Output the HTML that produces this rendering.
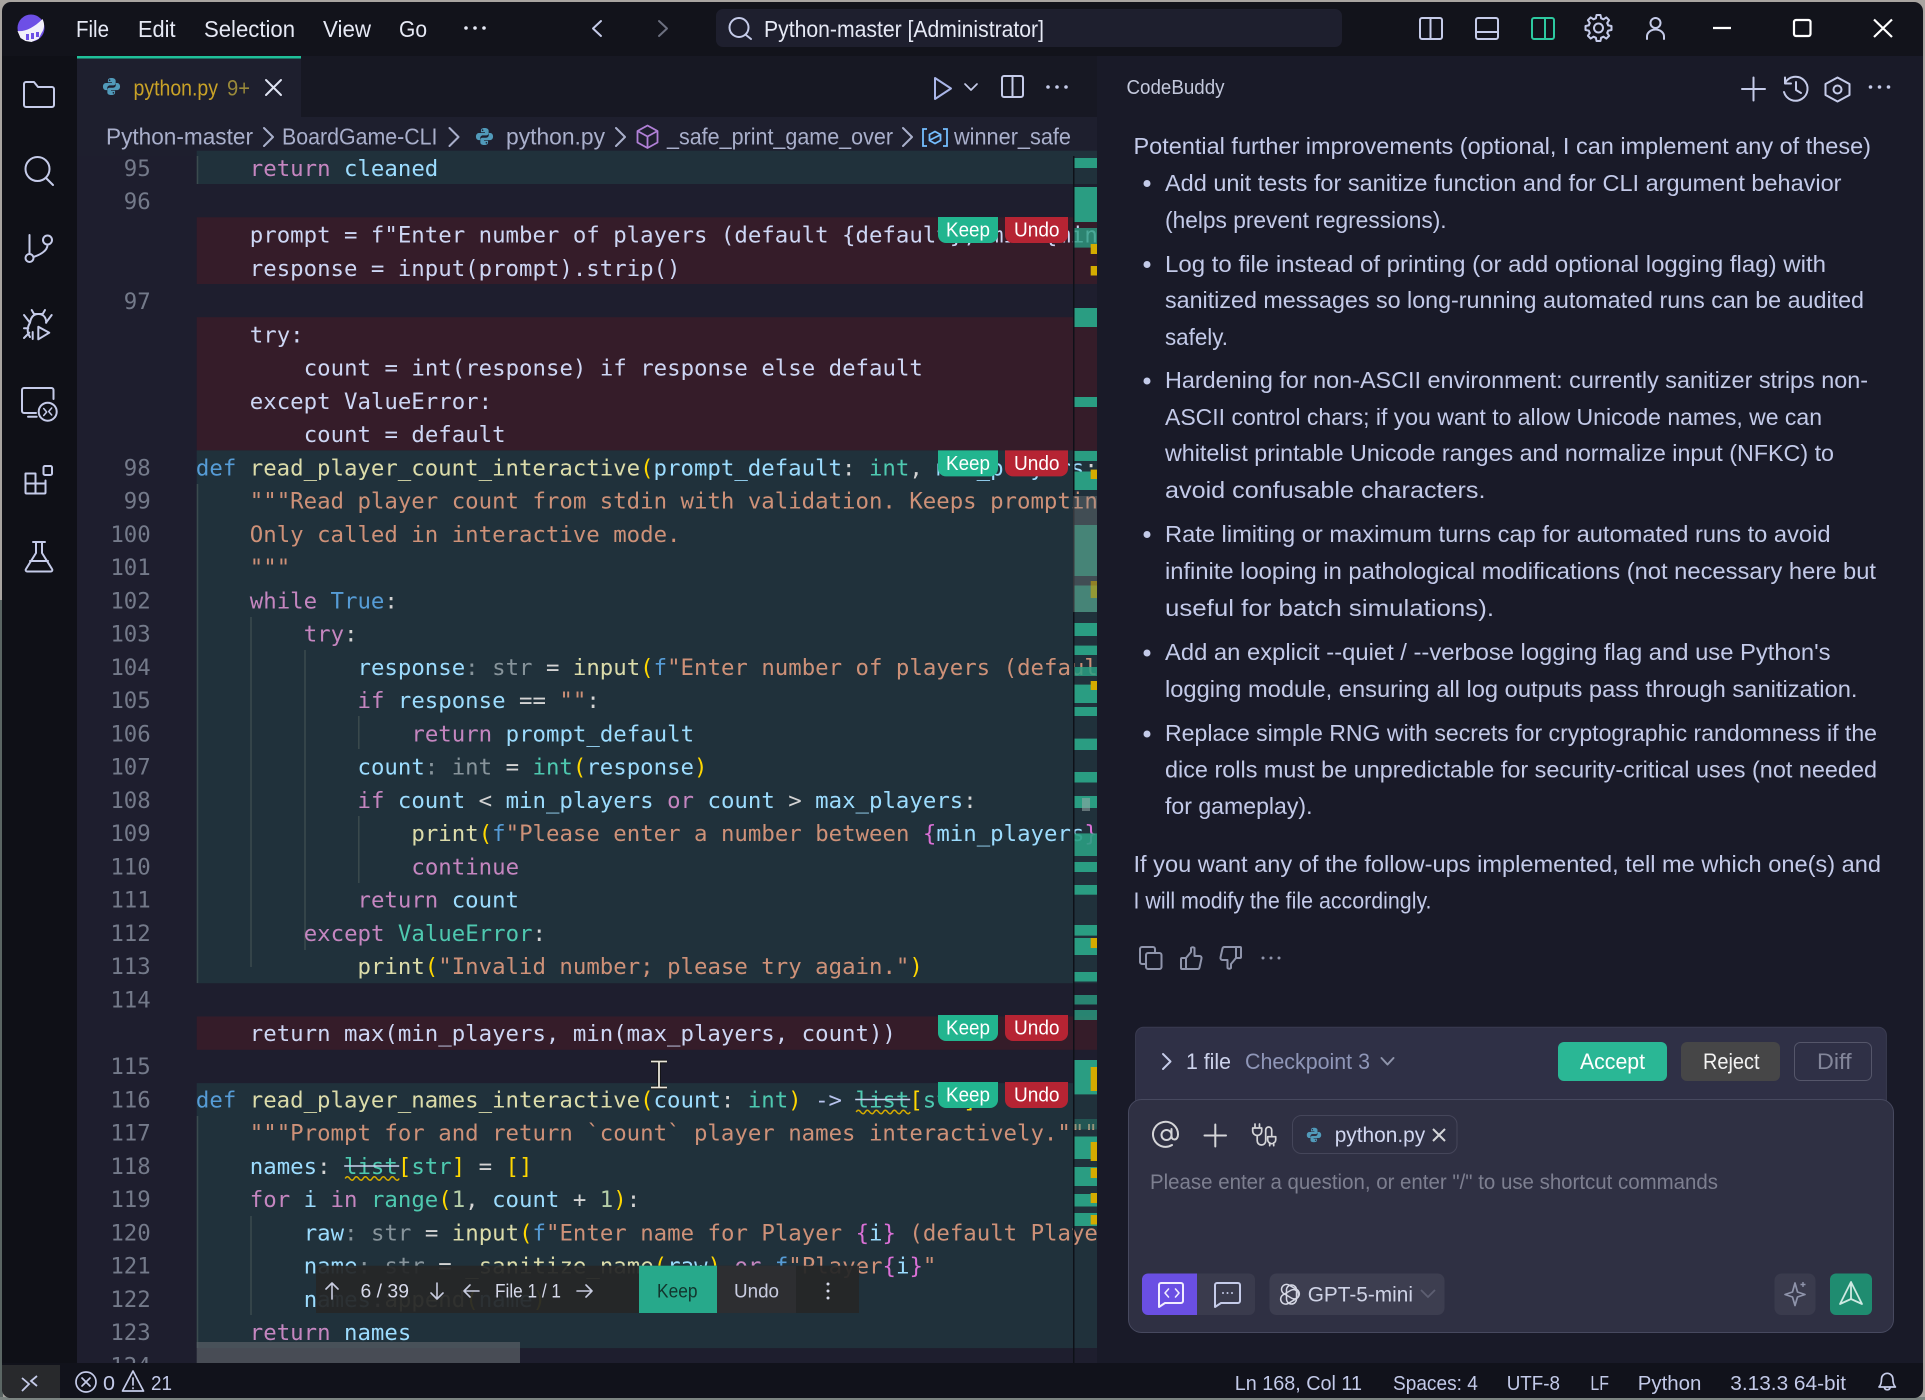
<!DOCTYPE html>
<html lang="en"><head><meta charset="utf-8"><title>Python-master [Administrator]</title>
<style>
html,body{margin:0;padding:0;background:#8d8a86;width:1925px;height:1400px;overflow:hidden}
svg{display:block;position:absolute;left:0;top:0}
text{font-family:"Liberation Sans",sans-serif;white-space:pre}
.u{fill:#e6e9f5;font-size:23px}
.c{fill:#c3cae9;font-size:23px}
.st{fill:#c3cae9;font-size:20.500px}
.code text,.ln{font-family:"DejaVu Sans Mono",monospace;font-size:22.37px}
.code text{fill:#cdd6f4}
.ln{fill:#747a8a;text-anchor:end}
.k{fill:#c586c0}.v{fill:#9cdcfe}.f{fill:#dcdcaa}.s{fill:#ce9178}.t{fill:#4ec9b0}.b{fill:#569cd6}.n{fill:#b5cea8}.o{fill:#d4d4d4}.y{fill:#ffd700}.p{fill:#da70d6}.l{fill:#179fff}.g{fill:#87949b}.a{fill:#b8c4ee}
.ic{fill:none;stroke:#c5cbe9;stroke-width:2;stroke-linecap:round;stroke-linejoin:round}
.ig{fill:none;stroke:#8f94ab;stroke-width:2;stroke-linecap:round;stroke-linejoin:round}
.ov{fill:#2a9d82}.yw{fill:#d4ab00}
</style></head><body>
<svg width="1925" height="1400" viewBox="0 0 1925 1400" xmlns="http://www.w3.org/2000/svg">
<defs>
<clipPath id="ed"><rect x="77" y="156" width="1020" height="1207"/></clipPath>
<clipPath id="win"><rect x="2" y="2" width="1921" height="1396" rx="9"/></clipPath>
<symbol id="py" viewBox="0 0 16 16"><path fill="#519aba" d="M8 .8C5.6.8 5 1.8 5 2.9v1.5h3.4V5H3.2C1.9 5 .8 6.2.8 8s1 3 2.3 3h1.3V9.3c0-1.3 1-2.3 2.3-2.3h3c1.100 0 1.800-.8 1.800-1.800V2.900C11.300 1.700 10.300.8 8 .8zM6.400 2a.7.7 0 1 1 0 1.400.7.7 0 0 1 0-1.400z"/><path fill="#519aba" d="M8 15.200c2.400 0 3-1 3-2.100v-1.500H7.600V11h5.200c1.300 0 2.400-1.200 2.400-3s-1-3-2.300-3h-1.300v1.700c0 1.300-1 2.300-2.300 2.300h-3c-1.100 0-1.800.8-1.800 1.800v2.300c0 1.200 1 2.100 3.300 2.100zm1.600-1.200a.7.7 0 1 1 0-1.400.7.7 0 0 1 0 1.400z"/></symbol>
<g id="tooth"><path d="M-3.830-9.240L-2.600-9.650L-2-13H2L2.600-9.650L3.830-9.240"/></g>
<g id="ku">
<path fill="#22b58f" d="M938 0h60v18a8 8 0 0 1-8 8h-44a8 8 0 0 1-8-8z"/>
<text x="946" y="19.500" fill="#fff" font-size="20" textLength="44" lengthAdjust="spacingAndGlyphs">Keep</text>
<path fill="#b62433" d="M1005 0h63v18a8 8 0 0 1-8 8h-47a8 8 0 0 1-8-8z"/>
<text x="1014" y="19.500" fill="#fff" font-size="20" textLength="45.500" lengthAdjust="spacingAndGlyphs">Undo</text>
</g>
</defs>

<rect width="1925" height="1400" fill="#a9a5a1"/>
<rect x="0" y="600" width="3" height="800" fill="#5b6664"/>
<rect x="0" y="1397" width="1925" height="3" fill="#7d8582"/>
<g clip-path="url(#win)">
<!-- panels -->
<rect x="0" y="0" width="1925" height="56" fill="#12131b"/>
<rect x="0" y="56" width="77" height="1310" fill="#0f1017"/>
<rect x="77" y="56" width="1020" height="61" fill="#171823"/>
<rect x="77" y="58" width="224" height="59" fill="#1e1f2e"/>
<rect x="77" y="56" width="224" height="2.500" fill="#1fc19a"/>
<rect x="77" y="117" width="1020" height="39" fill="#1e1f2e"/>
<rect x="77" y="156" width="1020" height="1207" fill="#1e1e2e"/>
<rect x="1097" y="56" width="828" height="1307" fill="#191a28"/>
<rect x="0" y="1363" width="1925" height="37" fill="#11121b"/>

<!-- title bar -->
<circle cx="31" cy="28" r="13.500" fill="#6d4fe6"/>
<path fill="#f2f0fb" d="M17.500 31c7 1 16-3 25-12 2.500 5 2 10-1 14l-3 6-7 3-6-1-5-3z"/>
<path fill="#6d4fe6" d="M26 34h3v6h-3zM31 33h3v6h-3zM36 32h3v5h-3z"/>
<text class="u" x="76" y="37" textLength="33" lengthAdjust="spacingAndGlyphs">File</text>
<text class="u" x="138" y="37" textLength="37.500" lengthAdjust="spacingAndGlyphs">Edit</text>
<text class="u" x="204" y="37" textLength="91" lengthAdjust="spacingAndGlyphs">Selection</text>
<text class="u" x="323" y="37" textLength="48" lengthAdjust="spacingAndGlyphs">View</text>
<text class="u" x="399" y="37" textLength="28" lengthAdjust="spacingAndGlyphs">Go</text>
<g fill="#e6e9f5"><circle cx="466" cy="28" r="1.800"/><circle cx="475" cy="28" r="1.800"/><circle cx="484" cy="28" r="1.800"/></g>
<path class="ic" stroke="#dfe3f2" d="M601 21l-8 7.500 8 7.500"/>
<path class="ig" style="stroke:#6c7080" d="M659 21l8 7.500-8 7.500"/>
<rect x="716" y="9" width="626" height="38" rx="7" fill="#1e1f2e"/>
<circle class="ic" cx="739" cy="27.500" r="9.500"/><path class="ic" d="M746 35l5 4"/>
<text class="u" x="764" y="37" textLength="280" lengthAdjust="spacingAndGlyphs">Python-master [Administrator]</text>
<g class="ic">
<rect x="1420" y="18" width="22" height="21" rx="2"/><path d="M1430.500 18v21"/>
<rect x="1476" y="18" width="22" height="21" rx="2"/><path d="M1476 32h22"/>
<rect x="1532" y="18" width="22" height="21" rx="2" style="stroke:#2dc9a0"/><path d="M1545 18v21" style="stroke:#2dc9a0"/>
<circle cx="1598.500" cy="28" r="4.500"/>
<g transform="translate(1598.500 28)"><use href="#tooth"/><use href="#tooth" transform="rotate(45)"/><use href="#tooth" transform="rotate(90)"/><use href="#tooth" transform="rotate(135)"/><use href="#tooth" transform="rotate(180)"/><use href="#tooth" transform="rotate(225)"/><use href="#tooth" transform="rotate(270)"/><use href="#tooth" transform="rotate(315)"/></g>
<circle cx="1655.500" cy="23" r="5"/><path d="M1647 39v-2.500a8.500 7 0 0 1 17 0v2.500"/>
</g>
<g fill="none" stroke="#fff" stroke-width="2.200">
<path d="M1713 28h18"/><rect x="1794" y="20" width="16.500" height="16" rx="2"/><path d="M1874 19.500l18 17.500M1892 19.500l-18 17.500"/>
</g>

<!-- activity bar -->
<g class="ic">
<path d="M26 82h8l4 5h14a2 2 0 0 1 2 2v16a2 2 0 0 1-2 2H26a2 2 0 0 1-2-2V84a2 2 0 0 1 2-2z"/>
<circle cx="37.500" cy="169" r="12"/><path d="M46 178l7 7"/>
<circle cx="29.500" cy="258" r="4"/><circle cx="47.500" cy="240" r="4.500"/><path d="M29.500 235v19M47.500 245c0 6-8 10-14 12"/>
<path d="M31.700 310l2.300 4h8.700l2.300-4M24 315l6 7.700M51.700 315l-5.700 7.700M30 322.700c1-6 4-8.700 8.300-8.700s7.700 2.700 8 8.700M30 322.700c-3 5-3 10 0 14.300M24 328.300h4.300M24 338l5.300-5.300M32.700 332v7M34 336.500"/>
<path d="M38.300 326.700l11 6-11 6.600z"/>
<path d="M36 413H24a2 2 0 0 1-2-2V390a2 2 0 0 1 2-2h27.500a2 2 0 0 1 2 2v9M28 416.700h8.700"/><circle cx="47.700" cy="411.700" r="9"/><path d="M43.700 408.500l3 3.500-3 3.500M51.700 408l-3 3.500 3 3.500" stroke-width="1.500"/>
<rect x="43.500" y="466" width="8.500" height="9" rx="1.500"/><path d="M25.500 473.500h10v20h-9a1 1 0 0 1-1-1zM25.500 483.500h20v9a1 1 0 0 1-1 1h-9"/><path d="M45.500 483.500v-3"/>
<path d="M33 542h12M36 542v11L26 569a1.500 1.500 0 0 0 1 2.500h24a1.500 1.500 0 0 0 1-2.500L42 553v-11M30 561h18"/>
</g>

<!-- tab -->
<use href="#py" x="102" y="77" width="19" height="19"/>
<text x="133.500" y="95.500" fill="#c9a227" font-size="22" textLength="84.500" lengthAdjust="spacingAndGlyphs">python.py</text>
<text x="227" y="95.500" fill="#9a8a3a" font-size="22" textLength="23" lengthAdjust="spacingAndGlyphs">9+</text>
<path class="ic" style="stroke:#dfe3f2" d="M266 80l15 15M281 80l-15 15"/>
<g class="ic">
<path d="M935 78l16 10.500-16 10.500z" style="stroke:#aab6e8"/><path d="M965 84l6 6 6-6" stroke-width="1.700"/>
<rect x="1002" y="76" width="21" height="21" rx="2"/><path d="M1012.500 76v21"/>
</g>
<g fill="#c5cbe9"><circle cx="1048" cy="87" r="1.800"/><circle cx="1057" cy="87" r="1.800"/><circle cx="1066" cy="87" r="1.800"/></g>

<!-- breadcrumb -->
<g fill="#a9afcb" font-size="23">
<text x="106" y="144.500" textLength="147" lengthAdjust="spacingAndGlyphs">Python-master</text>
<text x="282" y="144.500" textLength="155.500" lengthAdjust="spacingAndGlyphs">BoardGame-CLI</text>
<text x="506" y="144.500" textLength="99" lengthAdjust="spacingAndGlyphs">python.py</text>
<text x="667" y="144.500" textLength="226" lengthAdjust="spacingAndGlyphs">_safe_print_game_over</text>
<text x="954" y="144.500" textLength="117" lengthAdjust="spacingAndGlyphs">winner_safe</text>
</g>
<g class="ig" style="stroke:#a9afcb">
<path d="M264 128l9 9-9 9M449.500 128l9 9-9 9M616 128l9 9-9 9M903 128l9 9-9 9"/>
</g>
<use href="#py" x="475" y="127" width="19" height="19"/>
<g fill="none" stroke="#b180d7" stroke-width="1.800" stroke-linejoin="round"><path d="M647.500 125.500l10 5.500v11.500l-10 5.500-10-5.500V131zM637.500 131l10 5.500 10-5.500M647.500 136.500V148"/></g>
<g fill="none" stroke="#75beff" stroke-width="1.800"><path d="M927 129h-4v17h4M943 129h4v17h-4"/><path d="M935 131.500l5.500 3v6l-5.500 3-5.500-3v-6zM930 140l10-5"/></g>

<!-- editor rows -->
<g>
<rect x="196.700" y="150.700" width="900.300" height="33.300" fill="#20313b"/>
<rect x="196.700" y="217.300" width="900.300" height="66.700" fill="#351c29"/>
<rect x="196.700" y="317.200" width="900.300" height="133.200" fill="#351c29"/>
<rect x="196.700" y="450.400" width="900.300" height="532.800" fill="#20313b"/>
<rect x="196.700" y="1016.500" width="900.300" height="33.300" fill="#351c29"/>
<rect x="196.700" y="1083.100" width="900.300" height="265" fill="#20313b"/>
</g>
<g clip-path="url(#ed)">
<!-- indent guides -->
<g stroke="#3b4b4e" stroke-width="1.500">
<path d="M197.500 150v34M197.500 484v499M197.500 1116v232"/>
<path d="M251 617v350M251 1216v99"/>
<path d="M305 650v300"/>
<path d="M358.800 716v33M358.800 816v67"/>
</g>
<!-- line numbers -->
<g transform="translate(0 1.010) scale(1 .9988)">
<text class="ln" x="150.700" y="175.200">95</text><text class="ln" x="150.700" y="208.500">96</text><text class="ln" x="150.700" y="308.400">97</text><text class="ln" x="150.700" y="474.900">98</text><text class="ln" x="150.700" y="508.200">99</text><text class="ln" x="150.700" y="541.500">100</text><text class="ln" x="150.700" y="574.800">101</text><text class="ln" x="150.700" y="608.100">102</text><text class="ln" x="150.700" y="641.400">103</text><text class="ln" x="150.700" y="674.700">104</text><text class="ln" x="150.700" y="708">105</text><text class="ln" x="150.700" y="741.300">106</text><text class="ln" x="150.700" y="774.600">107</text><text class="ln" x="150.700" y="807.900">108</text><text class="ln" x="150.700" y="841.200">109</text><text class="ln" x="150.700" y="874.500">110</text><text class="ln" x="150.700" y="907.800">111</text><text class="ln" x="150.700" y="941.100">112</text><text class="ln" x="150.700" y="974.400">113</text><text class="ln" x="150.700" y="1007.700">114</text><text class="ln" x="150.700" y="1074.300">115</text><text class="ln" x="150.700" y="1107.600">116</text><text class="ln" x="150.700" y="1140.900">117</text><text class="ln" x="150.700" y="1174.200">118</text><text class="ln" x="150.700" y="1207.500">119</text><text class="ln" x="150.700" y="1240.800">120</text><text class="ln" x="150.700" y="1274.100">121</text><text class="ln" x="150.700" y="1307.400">122</text><text class="ln" x="150.700" y="1340.700">123</text><text class="ln" x="150.700" y="1374">124</text>
</g>
<!-- code -->
<g class="code" transform="translate(-.8 1.010) scale(1 .9988)">
<text x="250.600" y="175.200"><tspan class="k">return</tspan> <tspan class="v">cleaned</tspan></text>
<text x="250.600" y="241.800">prompt = f"Enter number of players (default {default}, min {min_players}, max {max_players}): "</text>
<text x="250.600" y="275.100">response = input(prompt).strip()</text>
<text x="250.600" y="341.700">try:</text>
<text x="304.500" y="375">count = int(response) if response else default</text>
<text x="250.600" y="408.300">except ValueError:</text>
<text x="304.500" y="441.600">count = default</text>
<text x="196.700" y="474.900"><tspan class="b">def</tspan> <tspan class="f">read_player_count_interactive</tspan><tspan class="y">(</tspan><tspan class="v">prompt_default</tspan><tspan class="o">:</tspan> <tspan class="t">int</tspan><tspan class="o">,</tspan> <tspan class="v">min_players</tspan><tspan class="o">:</tspan> <tspan class="t">int</tspan></text>
<text x="250.600" y="508.200"><tspan class="s">"""Read player count from stdin with validation. Keeps prompting until valid.</tspan></text>
<text x="250.600" y="541.500"><tspan class="s">Only called in interactive mode.</tspan></text>
<text x="250.600" y="574.800"><tspan class="s">"""</tspan></text>
<text x="250.600" y="608.100"><tspan class="k">while</tspan> <tspan class="b">True</tspan><tspan class="o">:</tspan></text>
<text x="304.500" y="641.400"><tspan class="k">try</tspan><tspan class="o">:</tspan></text>
<text x="358.300" y="674.700"><tspan class="v">response</tspan><tspan class="g">: str</tspan> <tspan class="o">=</tspan> <tspan class="f">input</tspan><tspan class="y">(</tspan><tspan class="b">f</tspan><tspan class="s">"Enter number of players (default</tspan></text>
<text x="358.300" y="708"><tspan class="k">if</tspan> <tspan class="v">response</tspan> <tspan class="o">==</tspan> <tspan class="s">""</tspan><tspan class="o">:</tspan></text>
<text x="412.200" y="741.300"><tspan class="k">return</tspan> <tspan class="v">prompt_default</tspan></text>
<text x="358.300" y="774.600"><tspan class="v">count</tspan><tspan class="g">: int</tspan> <tspan class="o">=</tspan> <tspan class="t">int</tspan><tspan class="y">(</tspan><tspan class="v">response</tspan><tspan class="y">)</tspan></text>
<text x="358.300" y="807.900"><tspan class="k">if</tspan> <tspan class="v">count</tspan> <tspan class="o">&lt;</tspan> <tspan class="v">min_players</tspan> <tspan class="k">or</tspan> <tspan class="v">count</tspan> <tspan class="o">&gt;</tspan> <tspan class="v">max_players</tspan><tspan class="o">:</tspan></text>
<text x="412.200" y="841.200"><tspan class="f">print</tspan><tspan class="y">(</tspan><tspan class="b">f</tspan><tspan class="s">"Please enter a number between </tspan><tspan class="p">{</tspan><tspan class="v">min_players</tspan><tspan class="p">}</tspan></text>
<text x="412.200" y="874.500"><tspan class="k">continue</tspan></text>
<text x="358.300" y="907.800"><tspan class="k">return</tspan> <tspan class="v">count</tspan></text>
<text x="304.500" y="941.100"><tspan class="k">except</tspan> <tspan class="t">ValueError</tspan><tspan class="o">:</tspan></text>
<text x="358.300" y="974.400"><tspan class="f">print</tspan><tspan class="y">(</tspan><tspan class="s">"Invalid number; please try again."</tspan><tspan class="y">)</tspan></text>
<text x="250.600" y="1041">return max(min_players, min(max_players, count))</text>
<text x="196.700" y="1107.600"><tspan class="b">def</tspan> <tspan class="f">read_player_names_interactive</tspan><tspan class="y">(</tspan><tspan class="v">count</tspan><tspan class="o">:</tspan> <tspan class="t">int</tspan><tspan class="y">)</tspan> <tspan class="a">-&gt;</tspan> <tspan class="t">list</tspan><tspan class="y">[</tspan><tspan class="t">str</tspan><tspan class="y">]</tspan><tspan class="o">:</tspan></text>
<text x="250.600" y="1140.900"><tspan class="s">"""Prompt for and return `count` player names interactively."""</tspan></text>
<text x="250.600" y="1174.200"><tspan class="v">names</tspan><tspan class="o">:</tspan> <tspan class="t">list</tspan><tspan class="y">[</tspan><tspan class="t">str</tspan><tspan class="y">]</tspan> <tspan class="o">=</tspan> <tspan class="y">[]</tspan></text>
<text x="250.600" y="1207.500"><tspan class="k">for</tspan> <tspan class="v">i</tspan> <tspan class="k">in</tspan> <tspan class="t">range</tspan><tspan class="y">(</tspan><tspan class="n">1</tspan><tspan class="o">,</tspan> <tspan class="v">count</tspan> <tspan class="o">+</tspan> <tspan class="n">1</tspan><tspan class="y">)</tspan><tspan class="o">:</tspan></text>
<text x="304.500" y="1240.800"><tspan class="v">raw</tspan><tspan class="g">: str</tspan> <tspan class="o">=</tspan> <tspan class="f">input</tspan><tspan class="y">(</tspan><tspan class="b">f</tspan><tspan class="s">"Enter name for Player </tspan><tspan class="p">{</tspan><tspan class="v">i</tspan><tspan class="p">}</tspan><tspan class="s"> (default Player </tspan><tspan class="p">{</tspan><tspan class="v">i</tspan><tspan class="p">}</tspan><tspan class="s">): "</tspan></text>
<text x="304.500" y="1274.100"><tspan class="v">name</tspan><tspan class="g">: str</tspan> <tspan class="o">=</tspan> <tspan class="f">_sanitize_name</tspan><tspan class="y">(</tspan><tspan class="v">raw</tspan><tspan class="y">)</tspan> <tspan class="k">or</tspan> <tspan class="b">f</tspan><tspan class="s">"Player</tspan><tspan class="p">{</tspan><tspan class="v">i</tspan><tspan class="p">}</tspan><tspan class="s">"</tspan></text>
<text x="304.500" y="1307.400"><tspan class="v">names</tspan><tspan class="o">.</tspan><tspan class="f">append</tspan><tspan class="y">(</tspan><tspan class="v">name</tspan><tspan class="y">)</tspan></text>
<text x="250.600" y="1340.700"><tspan class="k">return</tspan> <tspan class="v">names</tspan></text>
</g>
<!-- strike + squiggle -->
<g fill="none" transform="translate(-.8 0)">
<path d="M856 1099.500h55M345 1166h55" stroke="#c8d2ee" stroke-width="1.600"/>
<path d="M857 1112q2-3.500 4.500 0t4.500 0t4.500 0t4.500 0t4.500 0t4.500 0t4.500 0t4.500 0t4.500 0t4.500 0t4.500 0t4.500 0M346 1178.500q2-3.500 4.500 0t4.500 0t4.500 0t4.500 0t4.500 0t4.500 0t4.500 0t4.500 0t4.500 0t4.500 0t4.500 0t4.500 0" stroke="#d4ab00" stroke-width="1.500"/>
</g>
</g>

<!-- overview ruler -->
<rect x="1073" y="156" width="1.500" height="1207" fill="#0e1118"/>
<rect x="1074.500" y="1348" width="22.500" height="15" fill="#1e1e2e"/>
<g class="ov">
<rect x="1074.500" y="158" width="22.500" height="10"/><rect x="1074.500" y="187" width="22.500" height="35"/><rect x="1074.500" y="228" width="22.500" height="19.600" opacity=".8"/><rect x="1074.500" y="308" width="22.500" height="19"/><rect x="1074.500" y="397" width="22.500" height="10"/><rect x="1074.500" y="451" width="22.500" height="10"/><rect x="1074.500" y="471.500" width="22.500" height="18.500"/><rect x="1074.500" y="525" width="22.500" height="51" opacity=".75"/><rect x="1074.500" y="585.500" width="22.500" height="26.500" opacity=".75"/><rect x="1074.500" y="623" width="22.500" height="13"/><rect x="1074.500" y="645.600" width="22.500" height="9.400"/><rect x="1074.500" y="667" width="22.500" height="9" opacity=".85"/><rect x="1074.500" y="684.600" width="22.500" height="18.400"/><rect x="1074.500" y="707" width="22.500" height="9"/><rect x="1074.500" y="738.600" width="22.500" height="11.400"/><rect x="1074.500" y="772" width="22.500" height="10.500"/><rect x="1074.500" y="796" width="22.500" height="12"/><rect x="1074.500" y="833.400" width="22.500" height="22.600" opacity=".9"/><rect x="1074.500" y="862" width="22.500" height="10"/><rect x="1074.500" y="885" width="22.500" height="9.700"/><rect x="1074.500" y="925" width="22.500" height="10.600"/><rect x="1074.500" y="938" width="22.500" height="17"/><rect x="1074.500" y="972" width="22.500" height="9.500"/><rect x="1074.500" y="995" width="22.500" height="9.500" opacity=".8"/><rect x="1074.500" y="1010" width="22.500" height="10" opacity=".8"/><rect x="1074.500" y="1060" width="22.500" height="34.400"/><rect x="1074.500" y="1136.500" width="22.500" height="22.500"/><rect x="1074.500" y="1167" width="22.500" height="19"/><rect x="1074.500" y="1194" width="22.500" height="12.500"/><rect x="1074.500" y="1213" width="22.500" height="13"/>
</g>
<rect x="1074.500" y="1119" width="22.500" height="10.500" fill="#2a9d82" opacity=".35"/>
<rect x="1073" y="496" width="24" height="116" fill="#8a8a8a" opacity=".32"/>
<rect x="1082" y="798" width="8" height="13" fill="#9aa" opacity=".55"/>
<g class="yw">
<rect x="1090.700" y="244" width="6.300" height="10"/><rect x="1090.700" y="266" width="6.300" height="9.500"/><rect x="1090.700" y="469.600" width="6.300" height="9.400"/><rect x="1090.700" y="581" width="6.300" height="17" opacity=".55"/><rect x="1090.700" y="681" width="6.300" height="9"/><rect x="1090.700" y="938" width="6.300" height="10"/><rect x="1090.700" y="1067" width="6.300" height="24"/><rect x="1090.700" y="1142" width="6.300" height="19"/><rect x="1090.700" y="1168" width="6.300" height="10"/><rect x="1090.700" y="1193" width="6.300" height="10"/><rect x="1090.700" y="1215" width="6.300" height="9.500"/>
</g>

<!-- keep / undo -->
<use href="#ku" y="217"/><use href="#ku" y="450.400"/><use href="#ku" y="1015"/><use href="#ku" y="1082"/>

<!-- horizontal scrollbar -->
<rect x="196.700" y="1342" width="323.300" height="21" fill="#5a5f66" opacity=".7"/>

<!-- floating review bar -->
<rect x="316" y="1265.700" width="543" height="47.300" fill="#252627" opacity=".94"/>
<rect x="639" y="1265.700" width="78" height="47.300" fill="#27a98b"/>
<rect x="717" y="1265.700" width="79" height="47.300" fill="#2d2e31"/>
<g class="ic" style="stroke:#c8cce0;stroke-width:1.600">
<path d="M332 1299v-16M326 1289l6-6 6 6M437 1283v16M431 1293l6 6 6-6M479 1291h-15M470 1285l-6 6 6 6M577 1291h15M586 1285l6 6-6 6"/>
</g>
<g fill="#d6d9ea" font-size="19">
<text x="360.500" y="1297.500" textLength="48.500" lengthAdjust="spacingAndGlyphs">6 / 39</text>
<text x="495" y="1297.500" textLength="66" lengthAdjust="spacingAndGlyphs">File 1 / 1</text>
<text x="734" y="1297.500" textLength="45" lengthAdjust="spacingAndGlyphs" fill="#c8cce0">Undo</text>
</g>
<text x="657" y="1297.500" font-size="19" fill="#12352d" textLength="40.500" lengthAdjust="spacingAndGlyphs">Keep</text>
<g fill="#d6d9ea"><circle cx="828" cy="1284" r="1.500"/><circle cx="828" cy="1291" r="1.500"/><circle cx="828" cy="1298" r="1.500"/></g>

<!-- I-beam cursor -->
<path d="M651 1061.500h16M659 1061.500v26M651 1087.500h16" stroke="#111" stroke-width="3.500" fill="none"/>
<path d="M651 1061.500h16M659 1061.500v26M651 1087.500h16" stroke="#e9e6da" stroke-width="1.800" fill="none"/>

<!-- chat header -->
<text x="1126.500" y="94" fill="#c3c8dc" font-size="20" textLength="98" lengthAdjust="spacingAndGlyphs">CodeBuddy</text>
<g class="ic">
<path d="M1742 89h23M1753.500 77.500v23"/>
<path d="M1785 83a12 12 0 1 1-1 9M1785 77.500v6h6M1796 82v8l5 3"/>
<path d="M1837.500 77.500l12 6.500v11l-12 6.500-12-6.500V84z"/><circle cx="1837.500" cy="89.500" r="4"/>
</g>
<g fill="#c5cbe9"><circle cx="1870.500" cy="87" r="1.800"/><circle cx="1879.500" cy="87" r="1.800"/><circle cx="1888.500" cy="87" r="1.800"/></g>

<!-- chat body -->
<g>
<text class="c" x="1133.500" y="154" textLength="737.500" lengthAdjust="spacingAndGlyphs">Potential further improvements (optional, I can implement any of these)</text>
<text class="c" x="1165" y="191" textLength="676.500" lengthAdjust="spacingAndGlyphs">Add unit tests for sanitize function and for CLI argument behavior</text>
<text class="c" x="1165" y="228" textLength="281.600" lengthAdjust="spacingAndGlyphs">(helps prevent regressions).</text>
<text class="c" x="1165" y="272" textLength="661" lengthAdjust="spacingAndGlyphs">Log to file instead of printing (or add optional logging flag) with</text>
<text class="c" x="1165" y="308" textLength="699" lengthAdjust="spacingAndGlyphs">sanitized messages so long-running automated runs can be audited</text>
<text class="c" x="1165" y="345" textLength="63" lengthAdjust="spacingAndGlyphs">safely.</text>
<text class="c" x="1165" y="388" textLength="703" lengthAdjust="spacingAndGlyphs">Hardening for non-ASCII environment: currently sanitizer strips non-</text>
<text class="c" x="1165" y="425" textLength="657" lengthAdjust="spacingAndGlyphs">ASCII control chars; if you want to allow Unicode names, we can</text>
<text class="c" x="1165" y="461" textLength="669" lengthAdjust="spacingAndGlyphs">whitelist printable Unicode ranges and normalize input (NFKC) to</text>
<text class="c" x="1165" y="498" textLength="320.500" lengthAdjust="spacingAndGlyphs">avoid confusable characters.</text>
<text class="c" x="1165" y="542" textLength="665.500" lengthAdjust="spacingAndGlyphs">Rate limiting or maximum turns cap for automated runs to avoid</text>
<text class="c" x="1165" y="579" textLength="711" lengthAdjust="spacingAndGlyphs">infinite looping in pathological modifications (not necessary here but</text>
<text class="c" x="1165" y="616" textLength="329" lengthAdjust="spacingAndGlyphs">useful for batch simulations).</text>
<text class="c" x="1165" y="660" textLength="665.500" lengthAdjust="spacingAndGlyphs">Add an explicit --quiet / --verbose logging flag and use Python's</text>
<text class="c" x="1165" y="697" textLength="692.500" lengthAdjust="spacingAndGlyphs">logging module, ensuring all log outputs pass through sanitization.</text>
<text class="c" x="1165" y="741" textLength="712" lengthAdjust="spacingAndGlyphs">Replace simple RNG with secrets for cryptographic randomness if the</text>
<text class="c" x="1165" y="777.500" textLength="712" lengthAdjust="spacingAndGlyphs">dice rolls must be unpredictable for security-critical uses (not needed</text>
<text class="c" x="1165" y="814" textLength="147.500" lengthAdjust="spacingAndGlyphs">for gameplay).</text>
<text class="c" x="1133.500" y="872" textLength="747.500" lengthAdjust="spacingAndGlyphs">If you want any of the follow-ups implemented, tell me which one(s) and</text>
<text class="c" x="1133.500" y="908.500" textLength="298" lengthAdjust="spacingAndGlyphs">I will modify the file accordingly.</text>
<g fill="#c3cae9"><circle cx="1147" cy="183.500" r="3.500"/><circle cx="1147" cy="264.500" r="3.500"/><circle cx="1147" cy="381" r="3.500"/><circle cx="1147" cy="534.500" r="3.500"/><circle cx="1147" cy="653" r="3.500"/><circle cx="1147" cy="734" r="3.500"/></g>
</g>
<g class="ig">
<rect x="1146" y="953" width="15.500" height="16" rx="2"/><path d="M1146 964h-4a2 2 0 0 1-2-2v-13a2 2 0 0 1 2-2h11a2 2 0 0 1 2 2v3"/>
<path d="M1186 958v11h-4a1 1 0 0 1-1-1v-9a1 1 0 0 1 1-1zM1186 958l5-6v-4a2.500 2.500 0 0 1 3.500 0v8h5a2 2 0 0 1 2 2.500l-2 9a2 2 0 0 1-2 1.500h-12"/>
<path d="M1236 958v-11h4a1 1 0 0 1 1 1v9a1 1 0 0 1-1 1zM1236 958l-5 6v4a2.500 2.500 0 0 1-3.500 0v-8h-5a2 2 0 0 1-2-2.500l2-9a2 2 0 0 1 2-1.500h12"/>
</g>
<g fill="#8f94ab"><circle cx="1263" cy="958" r="1.500"/><circle cx="1271" cy="958" r="1.500"/><circle cx="1279" cy="958" r="1.500"/></g>

<!-- checkpoint card -->
<rect x="1135.600" y="1027.300" width="750.800" height="90" rx="8" fill="#2f3046" stroke="#3a3b50"/>
<path class="ic" stroke-width="1.800" d="M1163 1054l7.500 7.500-7.500 7.500"/>
<text x="1186" y="1069" fill="#cdd3ec" font-size="22" textLength="45" lengthAdjust="spacingAndGlyphs">1 file</text>
<text x="1245" y="1069" fill="#8f96b8" font-size="22" textLength="125" lengthAdjust="spacingAndGlyphs">Checkpoint 3</text>
<path class="ig" d="M1381.500 1058l6 6.500 6-6.500"/>
<rect x="1558" y="1042" width="109" height="39" rx="6" fill="#2ab795"/>
<text x="1580" y="1069" fill="#fff" font-size="22" textLength="65" lengthAdjust="spacingAndGlyphs">Accept</text>
<rect x="1681" y="1042" width="99" height="39" rx="6" fill="#464647"/>
<text x="1703" y="1069" fill="#f2f2f2" font-size="22" textLength="56.500" lengthAdjust="spacingAndGlyphs">Reject</text>
<rect x="1794.500" y="1042.500" width="77" height="38" rx="6" fill="none" stroke="#55566a"/>
<text x="1817" y="1069" fill="#83869a" font-size="22" textLength="34.600" lengthAdjust="spacingAndGlyphs">Diff</text>

<!-- input -->
<rect x="1128.500" y="1099.500" width="765" height="233" rx="13" fill="#2f3043" stroke="#47495f"/>
<g fill="none" stroke="#d5d5d8" stroke-width="2" stroke-linecap="round" stroke-linejoin="round">
<path d="M1172 1145a12.500 12.500 0 1 1 6-10.500c0 3-1.500 5-3.500 5s-3-1.500-3-3.500v-7M1171.500 1135a5 5 0 1 1-10 0 5 5 0 0 1 10 0z"/>
<path d="M1204.500 1135.500h21.500M1215.300 1124.500v22"/>
<path stroke-width="1.700" d="M1255 1124v4M1259.500 1124v4M1252.700 1128h9v3a4.500 4.500 0 0 1-9 0zM1257.200 1135.500v5c0 6 8.500 6 8.500 0V1130a3 3 0 0 1 6 0v6.700M1267.700 1136.700h8v3a4 4 0 0 1-8 0zM1269.700 1142.700v3M1273.700 1142.700v3"/>
</g>
<rect x="1292.500" y="1115.500" width="164.500" height="38" rx="9" fill="none" stroke="#45465a"/>
<use href="#py" x="1306" y="1127" width="16" height="16"/>
<text x="1334.700" y="1142" fill="#d0d6f0" font-size="21.500" textLength="90.500" lengthAdjust="spacingAndGlyphs">python.py</text>
<path d="M1433 1129l12 12M1445 1129l-12 12" stroke="#d5d5d8" stroke-width="2" fill="none"/>
<text x="1150" y="1189" fill="#7d7f90" font-size="21" textLength="568" lengthAdjust="spacingAndGlyphs">Please enter a question, or enter "/" to use shortcut commands</text>

<path fill="#6a4fe3" d="M1148 1273.500h49v41.500h-49a6 6 0 0 1-6-6v-29.500a6 6 0 0 1 6-6z"/>
<path fill="#3a3b4d" d="M1197 1273.500h52a6 6 0 0 1 6 6v29.500a6 6 0 0 1-6 6h-52z"/>
<g fill="none" stroke-width="2" stroke-linejoin="round" stroke-linecap="round">
<path stroke="#f1edff" d="M1161 1283h20a2 2 0 0 1 2 2v16a2 2 0 0 1-2 2h-16l-6 4v-22a2 2 0 0 1 2-2z"/><path stroke="#f1edff" d="M1168.500 1289l-3.500 4 3.500 4M1175.500 1289l3.500 4-3.500 4" stroke-width="1.600"/>
<path stroke="#c5cbe9" d="M1217 1283h21a2 2 0 0 1 2 2v16a2 2 0 0 1-2 2h-17l-6 4v-22a2 2 0 0 1 2-2z"/>
</g>
<g fill="#c5cbe9"><circle cx="1223" cy="1293" r="1"/><circle cx="1227.500" cy="1293" r="1"/><circle cx="1232" cy="1293" r="1"/></g>
<rect x="1269.500" y="1273.500" width="175" height="41.500" rx="7" fill="#3d3e50"/>
<g fill="none" stroke="#d5d7e4" stroke-width="1.500" transform="translate(1288.500 1294)">
<rect x="-9" y="-5" width="19" height="10" rx="5" transform="rotate(30) translate(0 -3)"/>
<rect x="-9" y="-5" width="19" height="10" rx="5" transform="rotate(90) translate(0 -3)"/>
<rect x="-9" y="-5" width="19" height="10" rx="5" transform="rotate(150) translate(0 -3)"/>
</g>
<text x="1307.700" y="1301.500" fill="#cfd3e6" font-size="21" textLength="105.300" lengthAdjust="spacingAndGlyphs">GPT-5-mini</text>
<path d="M1421 1290l7 7 7-7" fill="none" stroke="#5d5f72" stroke-width="1.800"/>
<rect x="1774.500" y="1273.500" width="41" height="41.500" rx="7" fill="#3a3b4d"/>
<path d="M1795 1283l2.500 9 7.500 2.500-7.500 2.500-2.500 8.500-2.500-8.500-7.500-2.500 7.500-2.500z" fill="none" stroke="#8f94ab" stroke-width="1.700" stroke-linejoin="round"/>
<path d="M1803 1282v5M1800.500 1284.500h5" stroke="#8f94ab" stroke-width="1.400"/>
<rect x="1830" y="1273.500" width="42" height="41.500" rx="6" fill="#1f8c70"/>
<path d="M1851 1282l-11 22 11-5 11 5zM1851 1282v17" fill="none" stroke="#cfe9e2" stroke-width="1.800" stroke-linejoin="round"/>

<!-- status bar -->
<rect x="2" y="1365" width="58" height="35" fill="#28292c"/>
<path d="M22 1378l7 6-7 7M37 1376l-6 5 6 5" fill="none" stroke="#c5cbe9" stroke-width="1.800"/>
<g class="ic" style="stroke-width:1.700">
<circle cx="86" cy="1382" r="10"/><path d="M82 1378l8 8M90 1378l-8 8"/>
<path d="M133 1371l10.500 20h-21zM133 1378v7M133 1388v.5"/>
</g>
<text class="st" x="103" y="1390" textLength="12" lengthAdjust="spacingAndGlyphs">0</text>
<text class="st" x="151" y="1390" textLength="21" lengthAdjust="spacingAndGlyphs">21</text>
<text class="st" x="1234.700" y="1390" textLength="127.300" lengthAdjust="spacingAndGlyphs">Ln 168, Col 11</text>
<text class="st" x="1393" y="1390" textLength="84.800" lengthAdjust="spacingAndGlyphs">Spaces: 4</text>
<text class="st" x="1506.700" y="1390" textLength="53.300" lengthAdjust="spacingAndGlyphs">UTF-8</text>
<text class="st" x="1590.400" y="1390" textLength="18.600" lengthAdjust="spacingAndGlyphs">LF</text>
<text class="st" x="1637.700" y="1390" textLength="63.700" lengthAdjust="spacingAndGlyphs">Python</text>
<text class="st" x="1730.300" y="1390" textLength="115.700" lengthAdjust="spacingAndGlyphs">3.13.3 64-bit</text>
<path class="ic" style="stroke-width:1.700" d="M1879 1387c2-2 2.500-4 2.500-8a5.700 5.700 0 0 1 11.400 0c0 4 .5 6 2.500 8zM1884.500 1388a3 3 0 0 0 5.500 0"/>
</g>
</svg>
</body></html>
